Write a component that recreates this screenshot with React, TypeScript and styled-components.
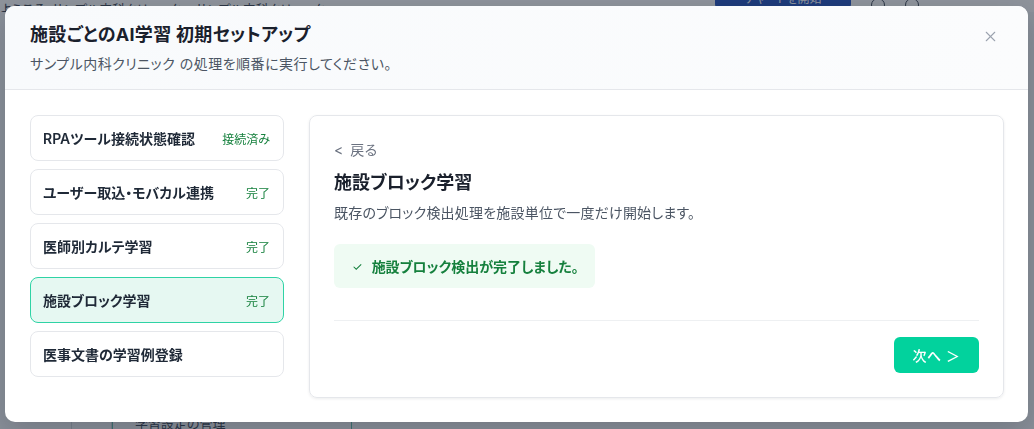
import React from "react";
import styled, { createGlobalStyle } from "styled-components";
import { X } from "lucide-react";

const Global = createGlobalStyle`
  * { box-sizing: border-box; }
  html, body { margin: 0; padding: 0; width: 1034px; height: 429px; overflow: hidden; }
  body {
    font-family: Inter, "Noto Sans CJK JP", "Noto Sans", sans-serif;
    font-feature-settings: "palt";
    background: #f3f4f6;
    color: #111827;
  }
`;

/* ---------- background page (under overlay) ---------- */
const Page = styled.div`
  width: 1034px;
  height: 429px;
  display: flex;
  flex-direction: column;
  background: #f5f6f8;
`;

const TopBar = styled.div`
  height: 12px;
  display: flex;
  align-items: flex-end;
  background: #ffffff;
  overflow: hidden;
`;

const Welcome = styled.div`
  font-size: 13px;
  color: #374151;
  white-space: nowrap;
  width: 715px;
  line-height: 14px;
  margin-bottom: -4px;
`;

const TopButton = styled.div`
  width: 136px;
  height: 18px;
  margin-bottom: 4px;
  background: #1e4fbf;
  color: #fff;
  font-size: 12px;
  line-height: 18px;
  text-align: center;
  border-radius: 0 0 4px 4px;
`;

const TopIcon = styled.div`
  width: 14px;
  height: 14px;
  border: 1.5px solid #374151;
  border-radius: 50%;
  margin-left: 20px;
`;

const PageBody = styled.div`
  flex: 1;
  display: flex;
`;

const SideA = styled.div`
  width: 72px;
  border-right: 1px solid #d1d5db;
`;
const SideB = styled.div`
  width: 40px;
  border-right: 1px solid #d1d5db;
`;
const BgCard = styled.div`
  width: 240px;
  border-left: 1px solid #5fb8a8;
  border-right: 1px solid #5fb8a8;
  display: flex;
  align-items: flex-end;
  padding: 0 0 0 22px;
  font-size: 13px;
  color: #374151;
  line-height: 12px;
  overflow: hidden;
`;

/* ---------- overlay + modal ---------- */
const Overlay = styled.div`
  position: fixed;
  inset: 0;
  background: rgba(32, 41, 58, 0.5);
  padding: 6px 6px 0 5px;
`;

const Modal = styled.div`
  width: 1023px;
  height: 416px;
  background: #ffffff;
  border-radius: 10px;
  overflow: hidden;
  display: flex;
  flex-direction: column;
  box-shadow: 0 10px 30px rgba(15, 23, 42, 0.2);
`;

const Header = styled.div`
  height: 84px;
  flex: none;
  padding: 16px 25px 16px 25px;
  background: linear-gradient(90deg, #f8fafc 0%, #fbfcfd 100%);
  border-bottom: 1px solid #e5e7eb;
  display: flex;
  justify-content: space-between;
  align-items: flex-start;
`;

const HeaderText = styled.div`
  display: flex;
  flex-direction: column;
  gap: 6px;
`;

const Title = styled.h2`
  margin: 0;
  font-size: 18px;
  line-height: 26px;
  font-weight: 700;
  letter-spacing: 0.3px;
  color: #1a202c;
`;

const Subtitle = styled.p`
  margin: 0;
  font-size: 14px;
  line-height: 20px;
  letter-spacing: 0.5px;
  color: #4b5563;
`;

const CloseButton = styled.button`
  border: none;
  background: transparent;
  padding: 0;
  margin: 4px 3px 0 0;
  width: 20px;
  height: 20px;
  display: flex;
  align-items: center;
  justify-content: center;
  color: #9ca3af;
  cursor: pointer;
`;

const Body = styled.div`
  flex: 1;
  display: grid;
  grid-template-columns: 254px 1fr;
  gap: 25px;
  padding: 25px 24px 24px 25px;
`;

const StepList = styled.div`
  display: flex;
  flex-direction: column;
  gap: 8px;
`;

const StepCard = styled.div<{ $active?: boolean }>`
  height: 46px;
  display: flex;
  align-items: center;
  justify-content: space-between;
  padding: 0 13px 0 12px;
  border-radius: 8px;
  border: 1px solid ${(p) => (p.$active ? "#2fd3a5" : "#e5e7eb")};
  background: ${(p) => (p.$active ? "#e6f8f2" : "#ffffff")};
`;

const StepName = styled.span`
  font-size: 14px;
  font-weight: 600;
  color: #1f2937;
`;

const StepStatus = styled.span`
  font-size: 12px;
  color: #15803d;
`;

const Panel = styled.div`
  border: 1px solid #e5e7eb;
  border-radius: 8px;
  box-shadow: 0 1px 3px rgba(15, 23, 42, 0.08);
  padding: 24px 24px 23px 24px;
  display: flex;
  flex-direction: column;
`;

const BackLink = styled.div`
  font-size: 14px;
  line-height: 20px;
  color: #6b7280;
  word-spacing: 2px;
  letter-spacing: 0.5px;
`;

const PanelTitle = styled.h3`
  margin: 10px 0 0;
  font-size: 18px;
  line-height: 26px;
  font-weight: 700;
  color: #1a202c;
`;

const PanelDesc = styled.p`
  margin: 7px 0 0;
  font-size: 14px;
  line-height: 20px;
  letter-spacing: 0.2px;
  color: #4b5563;
`;

const SuccessBox = styled.div`
  margin-top: 21px;
  align-self: flex-start;
  height: 44px;
  padding: 0 16px 0 18px;
  border-radius: 6px;
  background: #effbf3;
  display: flex;
  align-items: center;
  gap: 9px;
  white-space: nowrap;
  font-size: 14px;
  font-weight: 700;
  color: #15803d;
`;

const Check = styled.span`
  font-weight: 400;
  font-size: 12px;
  color: #15803d;
`;

const Divider = styled.div`
  margin-top: 32px;
  height: 1px;
  background: #eef0f2;
`;

const Footer = styled.div`
  margin-top: 16px;
  display: flex;
  justify-content: flex-end;
`;

const NextButton = styled.button`
  width: 85px;
  height: 36px;
  border: none;
  border-radius: 6px;
  background: #02d29d;
  color: #ffffff;
  font-family: inherit;
  font-feature-settings: "palt";
  font-size: 14px;
  font-weight: 500;
  letter-spacing: 0.5px;
  cursor: pointer;
`;

const steps = [
  { name: "RPAツール接続状態確認", status: "接続済み" },
  { name: "ユーザー取込・モバカル連携", status: "完了" },
  { name: "医師別カルテ学習", status: "完了" },
  { name: "施設ブロック学習", status: "完了", active: true },
  { name: "医事文書の学習例登録", status: "" },
];

export default function App() {
  return (
    <>
      <Global />
      <Page>
        <TopBar>
          <Welcome>ようこそ、サンプル内科クリニック ・ サンプル内科クリニック</Welcome>
          <TopButton>チャートを開始</TopButton>
          <TopIcon />
          <TopIcon />
        </TopBar>
        <PageBody>
          <SideA />
          <SideB />
          <BgCard>学習設定の管理</BgCard>
        </PageBody>
      </Page>
      <Overlay>
        <Modal>
          <Header>
            <HeaderText>
              <Title>施設ごとのAI学習 初期セットアップ</Title>
              <Subtitle>サンプル内科クリニック の処理を順番に実行してください。</Subtitle>
            </HeaderText>
            <CloseButton aria-label="閉じる">
              <X size={17} strokeWidth={1.5} />
            </CloseButton>
          </Header>
          <Body>
            <StepList>
              {steps.map((s) => (
                <StepCard key={s.name} $active={s.active}>
                  <StepName>{s.name}</StepName>
                  {s.status && <StepStatus>{s.status}</StepStatus>}
                </StepCard>
              ))}
            </StepList>
            <Panel>
              <BackLink>&lt; 戻る</BackLink>
              <PanelTitle>施設ブロック学習</PanelTitle>
              <PanelDesc>既存のブロック検出処理を施設単位で一度だけ開始します。</PanelDesc>
              <SuccessBox>
                <Check>✓</Check>
                施設ブロック検出が完了しました。
              </SuccessBox>
              <Divider />
              <Footer>
                <NextButton>次へ ＞</NextButton>
              </Footer>
            </Panel>
          </Body>
        </Modal>
      </Overlay>
    </>
  );
}
